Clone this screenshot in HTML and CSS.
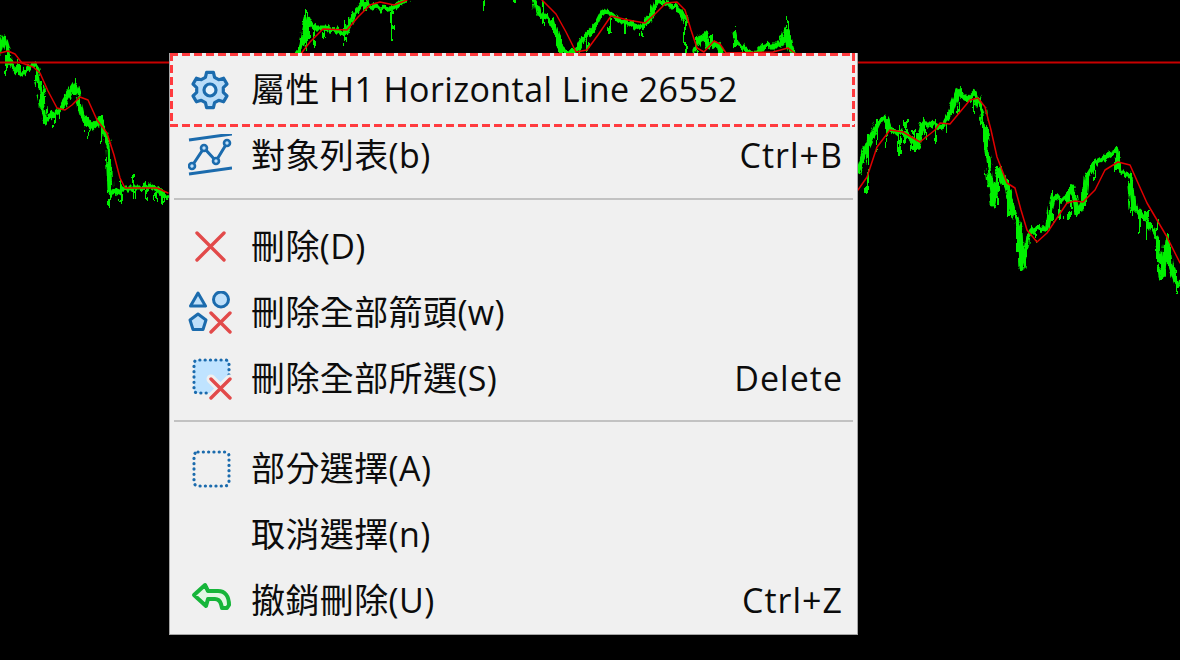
FILE: index.html
```html
<!DOCTYPE html>
<html lang="zh-Hant">
<head>
<meta charset="utf-8">
<title>Chart context menu</title>
<link rel="stylesheet" href="styles.css">
</head>
<body>
<main class="desk">
  <svg class="chart" viewBox="0 0 1180 660" aria-hidden="true">
    <defs>
      <filter id="noise" x="0" y="0" width="1180" height="660" filterUnits="userSpaceOnUse">
        <feTurbulence type="fractalNoise" baseFrequency="0.3 0.07" numOctaves="2" seed="7" result="n"/>
        <feDisplacementMap in="SourceGraphic" in2="n" scale="9" xChannelSelector="R" yChannelSelector="G" result="d"/>
        <feGaussianBlur in="d" stdDeviation="0.4"/>
      </filter>
    </defs>
    <g class="price">
      <polyline points="0,52 4,36 8,50 9,64 14,68 20,74 28,70 33,63 37,68 42,100 45,122 50,116 60,110 70,92 75,84 78,95 82,115 88,124 92,128 100,120 105,136 108,146 110,194 115,192 125,188 140,188 150,186 160,192 168,197"/>
      <polyline points="296,56 301,50 307,18 314,28 325,28 335,30 345,34 354,14 363,2 372,6 380,9 394,7 406,0"/>
      <polyline points="535,0 538,12 552,21 559,45 566,53 576,52 583,38 597,24 604,10 621,21 642,28 652,14 656,0 670,5 680,10 685,20"/>
      <polyline points="695,50 700,40 705,34 707,45 718,44 720,53"/>
      <polyline points="735,33 737,44 745,48 752,54"/>
      <polyline points="756,54 763,46 773,45 781,45 787,30 790,45 793,54"/>
      <polyline points="858,172 867,147 878,123 888,118 893,133 905,132 918,147 923,123 943,127 950,113 958,90 967,100 975,92 983,113 987,150 993,203 998,170 1007,187 1013,210 1020,230 1022,268 1028,237 1037,227 1047,230 1053,197 1067,200 1073,187 1077,213 1085,200 1087,177 1095,163 1117,150 1120,170 1130,177 1133,207 1147,220 1157,237 1162,277 1167,240 1170,263 1178,287"/>
      <path class="spikes" d="M6 34V78M18 60V78M36 66V80M44 95V118M53 112V127M60 108V120M75 78V95M88 118V138M101 116V142M110 150V208M121 180V202M134 176V200M146 182V200M155 186V202M163 190V203M307 12V50M314 28V50M325 26V38M345 20V46M392 10V41M366 0V12M484 0V10M515 0V3M544 0V25M560 40V58M588 28V52M610 16V32M625 20V34M642 22V38M685 20V53M697 36V53M711 32V46M735 26V46M787 18V46M868 135V192M877 120V150M886 118V148M899 124V156M905 120V142M914 130V152M925 118V142M935 118V144M947 118V132M958 88V112M975 90V112M998 165V205M1009 180V216M1018 220V255M1027 235V258M1037 225V244M1052 190V222M1060 196V220M1070 188V220M1076 205V221M1086 176V205M1094 160V182M1117 146V170M1132 200V225M1140 210V235M1147 210V240M1157 220V262M1167 235V262M1177 270V295"/>
    </g>
    <line class="hline" x1="0" y1="62.5" x2="1180" y2="62.5"/>
    <g class="avg">
      <polyline points="0,53 8,51 15,54 22,63 33,67 40,73 48,91 57,108 65,110 72,105 80,97 88,100 97,120 107,133 114,155 120,178 125,188 157,188 168,193"/>
      <polyline points="300,55 310,42 323,29 347,30 358,17 370,5 380,2 394,5 407,0"/>
      <polyline points="542,0 556,14 566,32 576,52 587,50 598,35 611,16 628,20 645,23 655,14 666,3 677,2 685,10 691,30 697,48 704,52 714,41 720,44 726,53 773,52 788,48 797,55"/>
      <polyline points="858,190 867,177 877,147 890,130 903,132 920,142 935,130 940,123 950,124 960,112 970,100 978,98 985,107 991,130 997,157 1007,183 1015,188 1021,210 1027,230 1037,242 1047,233 1067,203 1075,201 1083,202 1095,190 1105,170 1118,162 1130,165 1138,183 1147,203 1167,237 1180,263"/>
    </g>
  </svg>

  <nav class="menu">
    <div class="row focus">
      <svg class="ico" viewBox="0 0 44 44"><path class="gear" d="M18.6 4.3L25.4 4.3L26.6 9.3L30.7 11.7L35.6 10.2L39 16.1L35.3 19.7V24.3L39 27.9L35.6 33.8L30.7 32.3L26.6 34.7L25.4 39.7H18.6L17.4 34.7L13.3 32.3L8.4 33.8L5 27.9L8.7 24.3V19.7L5 16.1L8.4 10.2L13.3 11.7L17.4 9.3Z"/><circle class="gear-hub" cx="22" cy="22" r="6"/></svg>
      <span class="label">屬性 H1 Horizontal Line 26552</span>
    </div>
    <div class="row">
      <svg class="ico" viewBox="0 0 44 44"><path class="blue-line" d="M1 6L44 0M1 40L44 34M4 32L16 14L28 27L39 9"/><circle class="node" cx="4" cy="32" r="3"/><circle class="node" cx="16" cy="14" r="3"/><circle class="node" cx="28" cy="27" r="3"/><circle class="node" cx="39" cy="9" r="3"/></svg>
      <span class="label">對象列表(b)</span>
      <span class="keys">Ctrl+B</span>
    </div>
    <hr class="sep">
    <div class="row">
      <svg class="ico" viewBox="0 0 44 44"><path class="cross" d="M9 8L36 35M36 8L9 35"/></svg>
      <span class="label">刪除(D)</span>
    </div>
    <div class="row">
      <svg class="ico" viewBox="0 0 44 44"><path class="shape" d="M10 2L17.5 15H2.5Z"/><circle class="shape" cx="33" cy="8.500" r="7.500"/><path class="shape" d="M10 23L18 29L15 38.500H5L2 29Z"/><path class="cross" d="M23 22L42 41M42 22L23 41"/></svg>
      <span class="label">刪除全部箭頭(w)</span>
    </div>
    <div class="row">
      <svg class="ico" viewBox="0 0 44 44"><path class="sel-fill" d="M6 3H41V22L26 36H6Z"/><path class="dots" d="M41 18V7Q41 3 37 3H10Q6 3 6 7V32Q6 36 10 36H19"/><path class="halo" d="M23 22L42 41M42 22L23 41"/><path class="cross" d="M23 22L42 41M42 22L23 41"/></svg>
      <span class="label">刪除全部所選(S)</span>
      <span class="keys">Delete</span>
    </div>
    <hr class="sep tight">
    <div class="row">
      <svg class="ico" viewBox="0 0 44 44"><rect class="dots" x="6" y="5" width="35" height="34" rx="4"/></svg>
      <span class="label">部分選擇(A)</span>
    </div>
    <div class="row">
      <span class="ico"></span>
      <span class="label">取消選擇(n)</span>
    </div>
    <div class="row">
      <svg class="ico" viewBox="0 0 44 44"><path class="undo" d="M17 6L6 16L18 27L20 20H27C30 20 32 22 33 25L34 29H39L41 26C41 17 37 12 30 12H20Z"/></svg>
      <span class="label">撤銷刪除(U)</span>
      <span class="keys">Ctrl+Z</span>
    </div>
  </nav>
</main>
</body>
</html>
```
FILE: styles.css
```css
* { box-sizing: border-box; }
html, body { margin: 0; height: 100%; background: #000; overflow: hidden; }
.desk { position: relative; width: 1180px; height: 660px; background: #000; overflow: hidden; }
.chart { position: absolute; inset: 0; width: 1180px; height: 660px; display: block; }
.chart polyline { fill: none; stroke-linejoin: round; stroke-linecap: round; }
.price { filter: url(#noise); }
.price polyline { stroke: #00f000; stroke-width: 5; }
.spikes { fill: none; stroke: #00f000; stroke-width: 2; }
.hline { stroke: #c80000; stroke-width: 2; }
.avg polyline { stroke: #e00000; stroke-width: 1.5; }

.menu {
  position: absolute; left: 169px; top: 53px; width: 689px; height: 582px;
  background: #f0f0f0; border: 1px solid #a6a6a6; border-top: 0;
  padding: 4px 0 0; color: #0c0c0c;
  font: 400 34px/66px "Open Sans", "Noto Sans CJK TC", sans-serif;
  letter-spacing: 0.4px;
}
.row { position: relative; display: flex; align-items: center; height: 66px; padding: 0 14px 0 18px; }
.ico { flex: none; width: 44px; height: 44px; margin-right: 19px; display: block; }
.label { flex: 1; white-space: nowrap; margin-top: -2px; }
.keys { flex: none; white-space: nowrap; margin-top: -2px; letter-spacing: 1px; }
.sep { height: 2px; margin: 9px 4px 14px 4px; border: 0; background: #c2c2c2; }
.sep.tight { margin-top: 8px; }

.focus::after {
  content: ""; position: absolute; left: 0; right: 2px; top: -4px; bottom: -4px; pointer-events: none;
  background:
    repeating-linear-gradient(90deg, #ff3b3f 0 8px, transparent 8px 12px) left top / 100% 3px no-repeat,
    repeating-linear-gradient(90deg, #ff3b3f 0 8px, transparent 8px 12px) left bottom / 100% 3px no-repeat,
    repeating-linear-gradient(180deg, #ff3b3f 0 8px, transparent 8px 12px) left top / 3px 100% no-repeat,
    repeating-linear-gradient(180deg, #ff3b3f 0 8px, transparent 8px 12px) right top / 3px 100% no-repeat;
}

.gear { fill: #b9dcf8; stroke: #1b6bad; stroke-width: 3.2; stroke-linejoin: round; }
.gear-hub { fill: #e6f2fc; stroke: #1b6bad; stroke-width: 3.2; }
.blue-line { fill: none; stroke: #1b6bad; stroke-width: 3; }
.node { fill: #bfe0fa; stroke: #1b6bad; stroke-width: 2.6; }
.cross { fill: none; stroke: #e24a4a; stroke-width: 3.4; stroke-linecap: round; }
.halo { fill: none; stroke: #f0f0f0; stroke-width: 9; stroke-linecap: round; }
.shape { fill: #bfe0fa; stroke: #1b6bad; stroke-width: 3; stroke-linejoin: round; }
.sel-fill { fill: #bfe3ff; }
.dots { fill: none; stroke: #1b6bad; stroke-width: 3.2; stroke-linecap: round; stroke-dasharray: 0.1 5.2; }
.undo { fill: #e2f7e5; stroke: #16b53a; stroke-width: 4; stroke-linejoin: round; }
```
